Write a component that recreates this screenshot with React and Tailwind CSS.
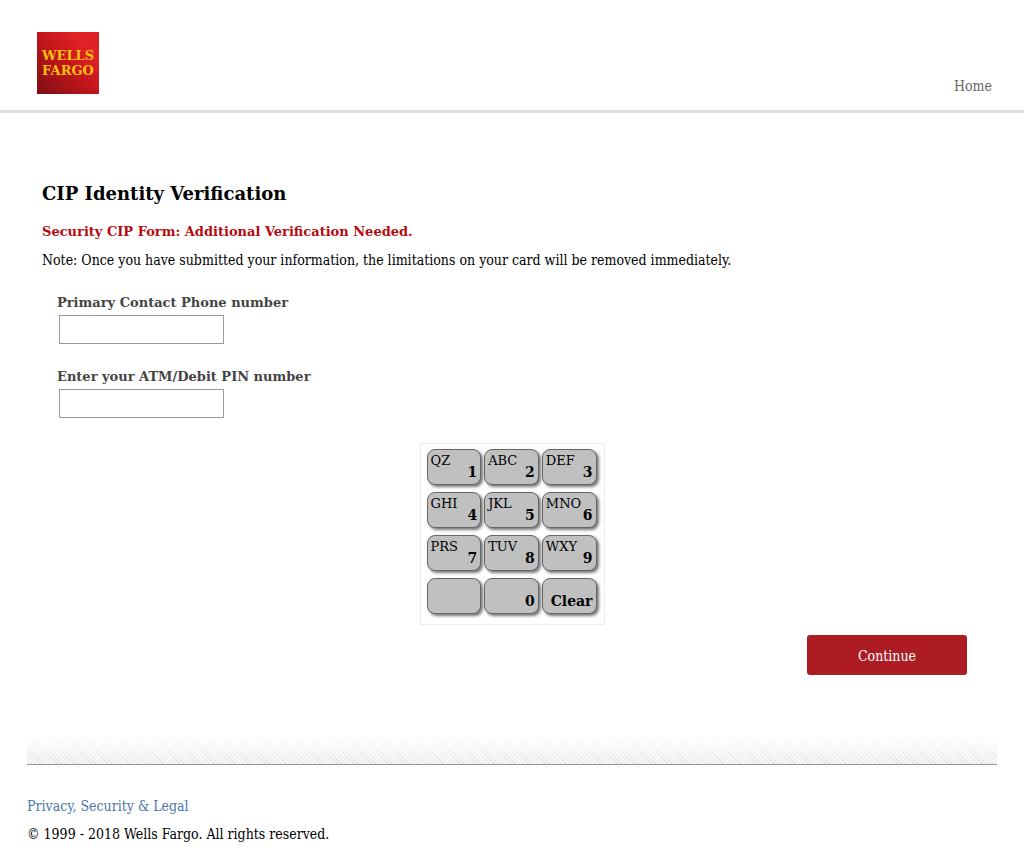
const KEYS = [
  ['QZ', '1'], ['ABC', '2'], ['DEF', '3'],
  ['GHI', '4'], ['JKL', '5'], ['MNO', '6'],
  ['PRS', '7'], ['TUV', '8'], ['WXY', '9'],
  ['', ''], ['', '0'], ['', 'Clear'],
];

function Logo() {
  return (
    <svg viewBox="0 0 62 62" className="size-[62px]" role="img" aria-label="Wells Fargo">
      <defs>
        <linearGradient id="logo-red" x1="0" y1="1" x2="1" y2="0">
          <stop offset="0" stopColor="#7d0f14" />
          <stop offset="0.5" stopColor="#c4161c" />
          <stop offset="0.8" stopColor="#e22326" />
          <stop offset="1" stopColor="#d81f24" />
        </linearGradient>
      </defs>
      <rect width="62" height="62" fill="url(#logo-red)" />
      <g fill="#fdc010" fontFamily="'DejaVu Serif', serif" fontWeight="700" fontSize="13" textAnchor="middle">
        <text x="31" y="28">WELLS</text>
        <text x="31" y="43">FARGO</text>
      </g>
    </svg>
  );
}

function Field({ id, label, type }) {
  return (
    <div className="flex flex-col items-start">
      <label htmlFor={id} className="font-['DejaVu_Serif',serif] text-[13px] leading-5 font-bold text-[#444]">{label}</label>
      <input id={id} type={type} className="mt-0.5 ml-0.5 h-[29px] w-[165px] border border-[#999] bg-white px-2 text-[13px]" />
    </div>
  );
}

function Key({ letters, value }) {
  return (
    <button
      type="button"
      aria-label={value || 'Blank'}
      className="flex h-9 flex-col rounded-lg border border-[#666] bg-[#c0c0c0] px-[3px] pt-1 text-left font-['DejaVu_Serif',serif] shadow-[2px_2px_3px_#777]"
    >
      <span className="h-[11px] self-start text-[13px] leading-[14px]">{letters}</span>
      <span className="self-end text-[14px] leading-[14px] font-bold">{value}</span>
    </button>
  );
}

export default function App() {
  return (
    <div className="bg-white font-['DejaVu_Serif_Condensed','DejaVu_Serif',serif] text-[14px] leading-5 text-black">
      <header className="flex items-end justify-between border-b-3 border-[#ddd] pt-8 pr-8 pb-4 pl-[37px]">
        <Logo />
        <a href="#home" className="-mb-0.5 text-[#666]">Home</a>
      </header>

      <main className="px-[42px] pt-[69px]">
        <h1 className="font-['DejaVu_Serif',serif] text-[18px] leading-6 font-bold">CIP Identity Verification</h1>
        <p className="mt-4 font-['DejaVu_Serif',serif] text-[13px] leading-5 font-bold text-[#b30c12]">Security CIP Form: Additional Verification Needed.</p>
        <p className="mt-2">Note: Once you have submitted your information, the limitations on your card will be removed immediately.</p>

        <form onSubmit={(e) => e.preventDefault()}>
          <div className="mt-[23px] ml-[15px] flex flex-col gap-[23px]">
            <Field id="phone" label="Primary Contact Phone number" type="tel" />
            <Field id="pin" label="Enter your ATM/Debit PIN number" type="password" />
          </div>

          <div className="mx-auto mt-[25px] grid w-[185px] grid-cols-3 gap-x-[3px] gap-y-[7px] border border-[#eee] pt-[5px] pr-[7px] pb-2.5 pl-1.5">
            {KEYS.map(([letters, value], i) => (
              <Key key={i} letters={letters} value={value} />
            ))}
          </div>

          <div className="mt-2.5 flex justify-end pr-[15px]">
            <button type="submit" className="h-10 w-40 rounded-[3px] bg-[#ae1c23] pt-0.5 text-white">Continue</button>
          </div>
        </form>
      </main>

      <footer className="mt-[60px] px-[27px] pb-3">
        <div className="h-[30px] border-b border-[#999] bg-[linear-gradient(to_bottom,#fff,#ffffffb0_40%,#ffffff20),repeating-linear-gradient(45deg,#deded9_0_1px,#f5f5f2_1px_3px)]" />
        <p className="mt-[31px]"><a href="#privacy" className="text-[#4a76a8]">Privacy, Security &amp; Legal</a></p>
        <p className="mt-2">© 1999 - 2018 Wells Fargo. All rights reserved.</p>
      </footer>
    </div>
  );
}
